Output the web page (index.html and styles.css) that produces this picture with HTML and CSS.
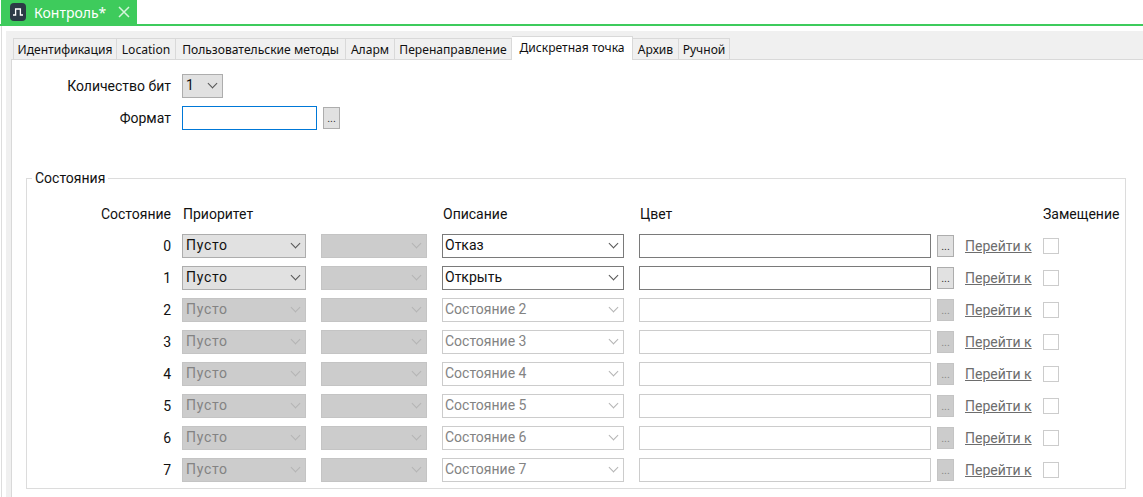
FILE: index.html
```html
<!DOCTYPE html>
<html lang="ru">

<head>
    <meta charset="UTF-8">
    <title>Контроль</title>
    <link rel="stylesheet" href="styles.css">
</head>

<body>
    <div class="doc-bar">
        <div class="doc-tab">
            <span class="doc-icon">
                <svg width="10" height="8" viewBox="0 0 10 8"><path d="M0 7H2.6V1H7.4V7H10" fill="none" stroke="#fff" stroke-width="1.3"/></svg>
            </span>
            <span class="doc-name">Контроль*</span>
            <svg class="doc-close" width="12" height="12" viewBox="0 0 12 12"><path d="M1 1L11 11M11 1L1 11" stroke="#d5f5dc" stroke-width="1.5"/></svg>
        </div>
    </div>
    <div class="outer">
        <div class="tabs-area">
            <div class="tabs">
                <div class="tab w1">Идентификация</div>
                <div class="tab w2">Location</div>
                <div class="tab w3">Пользовательские методы</div>
                <div class="tab w4">Аларм</div>
                <div class="tab w5">Перенаправление</div>
                <div class="tab active w6">Дискретная точка</div>
                <div class="tab w7">Архив</div>
                <div class="tab w8">Ручной</div>
            </div>
            <div class="panel">
                <div class="top-form">
                    <label class="lbl">Количество бит</label>
                    <div class="combo bits">1</div>
                    <label class="lbl">Формат</label>
                    <div class="format-row">
                        <div class="format-input"></div>
                        <button class="dots">...</button>
                    </div>
                </div>
                <fieldset class="states">
                    <legend>Состояния</legend>
                    <div class="grid">
                        <div class="lbl">Состояние</div>
                        <div class="head first">Приоритет</div>
                        <div></div>
                        <div class="head">Описание</div>
                        <div class="head">Цвет</div>
                        <div></div>
                        <div></div>
                        <div class="sub-head">Замещение</div>

                        <div class="lbl">0</div>
                        <div class="combo prio">Пусто</div>
                        <div class="combo off"></div>
                        <div class="combo edit">Отказ</div>
                        <div class="color"></div>
                        <button class="dots">...</button>
                        <a class="goto">Перейти к</a>
                        <div class="check"></div>

                        <div class="lbl">1</div>
                        <div class="combo prio">Пусто</div>
                        <div class="combo off"></div>
                        <div class="combo edit">Открыть</div>
                        <div class="color"></div>
                        <button class="dots">...</button>
                        <a class="goto">Перейти к</a>
                        <div class="check"></div>

                        <div class="lbl">2</div>
                        <div class="combo prio off">Пусто</div>
                        <div class="combo off"></div>
                        <div class="combo edit off">Состояние 2</div>
                        <div class="color off"></div>
                        <button class="dots off">...</button>
                        <a class="goto">Перейти к</a>
                        <div class="check"></div>

                        <div class="lbl">3</div>
                        <div class="combo prio off">Пусто</div>
                        <div class="combo off"></div>
                        <div class="combo edit off">Состояние 3</div>
                        <div class="color off"></div>
                        <button class="dots off">...</button>
                        <a class="goto">Перейти к</a>
                        <div class="check"></div>

                        <div class="lbl">4</div>
                        <div class="combo prio off">Пусто</div>
                        <div class="combo off"></div>
                        <div class="combo edit off">Состояние 4</div>
                        <div class="color off"></div>
                        <button class="dots off">...</button>
                        <a class="goto">Перейти к</a>
                        <div class="check"></div>

                        <div class="lbl">5</div>
                        <div class="combo prio off">Пусто</div>
                        <div class="combo off"></div>
                        <div class="combo edit off">Состояние 5</div>
                        <div class="color off"></div>
                        <button class="dots off">...</button>
                        <a class="goto">Перейти к</a>
                        <div class="check"></div>

                        <div class="lbl">6</div>
                        <div class="combo prio off">Пусто</div>
                        <div class="combo off"></div>
                        <div class="combo edit off">Состояние 6</div>
                        <div class="color off"></div>
                        <button class="dots off">...</button>
                        <a class="goto">Перейти к</a>
                        <div class="check"></div>

                        <div class="lbl">7</div>
                        <div class="combo prio off">Пусто</div>
                        <div class="combo off"></div>
                        <div class="combo edit off">Состояние 7</div>
                        <div class="color off"></div>
                        <button class="dots off">...</button>
                        <a class="goto">Перейти к</a>
                        <div class="check"></div>
                    </div>
                </fieldset>
            </div>
        </div>
    </div>
</body>

</html>
```

FILE: styles.css
```css
html,
body {
    height: 100%;
}

body {
    margin: 0;
    overflow: hidden;
    display: flex;
    flex-direction: column;
    background-color: #fff;
    color: #111;
    font-family: Roboto, sans-serif;
    font-size: 14px;
}

/* document tab on top */
.doc-bar {
    height: 24px;
    padding-left: 1px;
    border-bottom: 2px solid #3ecb5c;
    flex: none;
}

.doc-tab {
    width: 136px;
    height: 24px;
    display: flex;
    align-items: center;
    background-color: #3ecb5c;
    color: #fff;
    box-sizing: border-box;
    padding-left: 9px;
}

.doc-icon {
    width: 16px;
    height: 18px;
    background-color: #2c3a46;
    border-radius: 4px;
    display: flex;
    align-items: center;
    justify-content: center;
}

.doc-name {
    margin-left: 8px;
    font-family: "Noto Sans", sans-serif;
    font-size: 14px;
    width: 75px;
}

.doc-close {
    margin-left: 9px;
}

.outer {
    flex: 1;
    min-height: 0;
    margin-left: 1px;
    padding: 5px 0 0 4px;
    border-left: 1px solid #ddd;
    display: flex;
}

.tabs-area {
    flex: 1;
    min-width: 0;
    display: flex;
    flex-direction: column;
    background-color: #f0f0f0;
    padding: 5px 0 0 5px;
}

.tabs {
    display: flex;
    flex: none;
    height: 23px;
    padding-left: 2px;
    align-items: flex-end;
    font-family: "Noto Sans", sans-serif;
    font-size: 12.1px;
}

.tab {
    height: 21px;
    line-height: 21px;
    box-sizing: border-box;
    text-align: center;
    border: 1px solid #d9d9d9;
    border-bottom: none;
    border-left: none;
    white-space: nowrap;
}

.tab:first-child {
    border-left: 1px solid #d9d9d9;
}

.tab.active {
    height: 24px;
    margin-bottom: -1px;
    line-height: 22px;
    background-color: #fff;
    position: relative;
}

.w1 { width: 104px; }
.w2 { width: 59px; }
.w3 { width: 170px; }
.w4 { width: 49px; }
.w5 { width: 117px; }
.w6 { width: 121px; }
.w7 { width: 46px; }
.w8 { width: 51px; }

.panel {
    flex: 1;
    min-height: 0;
    overflow: hidden;
    background-color: #fff;
    border-top: 1px solid #d9d9d9;
    border-left: 1px solid #d9d9d9;
    padding: 14px 0 0 14px;
}

.top-form {
    display: grid;
    grid-template-columns: 145px auto;
    grid-auto-rows: 24px;
    column-gap: 11px;
    row-gap: 8px;
    align-items: center;
}

.lbl {
    text-align: right;
}

.format-row {
    display: flex;
    align-items: center;
    gap: 6px;
}

.format-input {
    width: 135px;
    height: 24px;
    box-sizing: border-box;
    border: 1px solid #0078d7;
}

.combo {
    height: 24px;
    line-height: 21px;
    box-sizing: border-box;
    padding-left: 3px;
    background-color: #e1e1e1;
    border: 1px solid #adadad;
    position: relative;
}

.combo::after {
    content: "";
    position: absolute;
    right: 6px;
    top: 5px;
    width: 6px;
    height: 6px;
    border-right: 1px solid #555;
    border-bottom: 1px solid #555;
    transform: rotate(45deg);
}

.combo.bits {
    width: 41px;
}

.combo.prio {
    letter-spacing: 0.7px;
}

.combo.edit {
    background-color: #fff;
    border-color: #7a7a7a;
    padding-left: 2px;
}

.combo.off {
    background-color: #ccc;
    border-color: #c4c4c4;
    color: #838383;
}

.combo.edit.off {
    background-color: #fff;
    border-color: #ccc;
}

.combo.off::after {
    border-color: #b4b4b4;
}

.dots {
    width: 17px;
    height: 22px;
    padding: 0;
    font-family: inherit;
    font-size: 11px;
    line-height: 22px;
    color: #333;
    background-color: #e1e1e1;
    border: 1px solid #adadad;
}

.dots.off {
    background-color: #ccc;
    border-color: #c4c4c4;
    color: #888;
}

.states {
    width: 1100px;
    height: 319px;
    box-sizing: border-box;
    margin: 40px 0 0 0;
    padding: 0;
    border: 1px solid #dcdcdc;
    min-width: 0;
}

.states legend {
    margin-left: 5px;
    padding: 0 3px;
    line-height: 16px;
}

.grid {
    display: grid;
    grid-template-columns: 144px 135px 121px 197px 307px 23px 78px auto;
    grid-template-rows: repeat(9, 24px);
    row-gap: 8px;
    align-items: center;
    margin-top: 16px;
}

.grid > * {
    margin-left: 15px;
}

.grid > .lbl {
    margin-left: 0;
}

.grid > .head {
    margin-left: 16px;
}

.grid > .head.first {
    margin-left: 12px;
}

.grid > .prio {
    margin-left: 11px;
}

.grid > .dots {
    margin-left: 6px;
}

.grid > .goto,
.grid > .check,
.grid > .sub-head {
    margin-left: 11px;
}

.goto {
    color: #6d6d6d;
    text-decoration: underline;
    white-space: nowrap;
}

.sub-head {
    white-space: nowrap;
}

.color {
    height: 24px;
    box-sizing: border-box;
    border: 1px solid #7a7a7a;
}

.color.off {
    border-color: #ccc;
}

.check {
    width: 16px;
    height: 16px;
    box-sizing: border-box;
    border: 1px solid #ccc;
}
```
